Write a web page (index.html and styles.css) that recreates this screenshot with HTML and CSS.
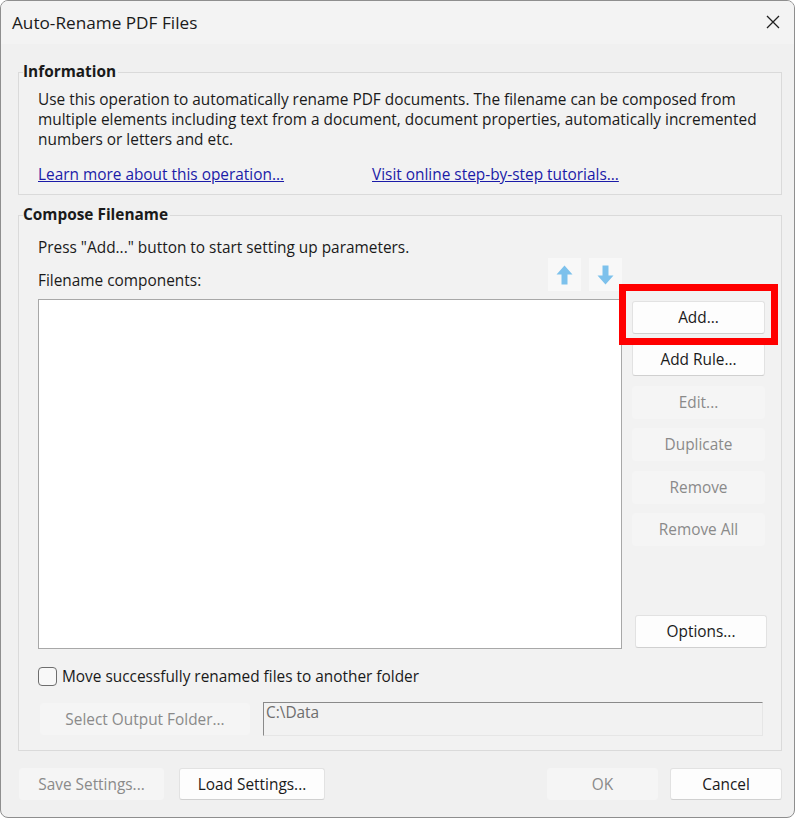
FILE: index.html
```html
<!DOCTYPE html>
<html lang="en">
<head>
    <meta charset="UTF-8">
    <title>Auto-Rename PDF Files</title>
    <link rel="stylesheet" href="styles.css">
</head>
<body>
    <div class="window">
        <div class="titlebar">
            <span class="title">Auto-Rename PDF Files</span>
            <span class="close-btn">
                <svg width="14" height="14" viewBox="0 0 14 14"><path d="M1 1 L13 13 M13 1 L1 13" stroke="#1f1f1f" stroke-width="1.3" fill="none"/></svg>
            </span>
        </div>

        <div class="content">
            <fieldset class="group info-group">
                <legend>Information</legend>
                <p class="info-text">Use this operation to automatically rename PDF documents. The filename can be composed from<br>multiple elements including text from a document, document properties, automatically incremented<br>numbers or letters and etc.</p>
                <div class="links">
                    <a href="#" class="link link-learn">Learn more about this operation...</a>
                    <a href="#" class="link">Visit online step-by-step tutorials...</a>
                </div>
            </fieldset>

            <fieldset class="group compose-group">
                <legend>Compose Filename</legend>
                <p class="hint">Press "Add..." button to start setting up parameters.</p>
                <div class="components-head">
                    <span>Filename components:</span>
                    <div class="arrows">
                        <span class="arrow-btn">
                            <svg width="17" height="20" viewBox="0 0 17 20"><path d="M8.5 0.5 L16.5 9.5 H11.5 V19.5 H5.5 V9.5 H0.5 Z" fill="#7dc1ec"/></svg>
                        </span>
                        <span class="arrow-btn">
                            <svg width="17" height="20" viewBox="0 0 17 20"><path d="M8.5 19.5 L16.5 10.5 H11.5 V0.5 H5.5 V10.5 H0.5 Z" fill="#7dc1ec"/></svg>
                        </span>
                    </div>
                </div>
                <div class="components-body">
                    <div class="list-box"></div>
                    <div class="side-buttons">
                        <button class="btn side-btn">Add...</button>
                        <button class="btn side-btn">Add Rule...</button>
                        <button class="btn side-btn" disabled>Edit...</button>
                        <button class="btn side-btn" disabled>Duplicate</button>
                        <button class="btn side-btn" disabled>Remove</button>
                        <button class="btn side-btn" disabled>Remove All</button>
                        <button class="btn options-btn">Options...</button>
                        <div class="highlight"></div>
                    </div>
                </div>
                <label class="check-row">
                    <span class="checkbox"></span>
                    Move successfully renamed files to another folder
                </label>
                <div class="output-row">
                    <button class="btn folder-btn" disabled>Select Output Folder...</button>
                    <div class="path-box">C:\Data</div>
                </div>
            </fieldset>

            <div class="footer">
                <button class="btn footer-btn" disabled>Save Settings...</button>
                <button class="btn footer-btn load-btn">Load Settings...</button>
                <span class="spacer"></span>
                <button class="btn footer-btn ok-btn" disabled>OK</button>
                <button class="btn footer-btn cancel-btn">Cancel</button>
            </div>
        </div>
    </div>
</body>
</html>
```

FILE: styles.css
```css
body {
    margin: 0;
    background: #ffffff;
    font-family: "Segoe UI", "Open Sans", sans-serif;
    font-size: 15.4px;
    color: #1a1a1a;
}

.window {
    width: 795px;
    height: 818px;
    box-sizing: border-box;
    border: 1px solid #8e8e8e;
    border-radius: 8px;
    background: #f0f0f0;
    overflow: hidden;
}

.titlebar {
    height: 43px;
    background: #f3f3f3;
    display: flex;
    align-items: center;
    justify-content: space-between;
    padding: 0 14px 0 11px;
}
.title {
    font-size: 17.2px;
    color: #1a1a1a;
}
.close-btn {
    display: flex;
    width: 14px;
    height: 14px;
    margin-top: -2px;
}

.content {
    padding: 0 12px 0 17px;
}

.group {
    margin: 0;
    padding: 0 13px 0 19px;
    border: 1px solid #dadada;
    background: #f2f2f2;
    min-width: 0;
}
.group legend {
    padding: 0 2px 0 0;
    margin-left: -15px;
    font-weight: bold;
    line-height: 20px;
}

.info-group {
    margin-top: 18px;
    padding-top: 8px;
    padding-bottom: 9px;
}
.info-text {
    margin: 0;
    line-height: 20px;
    white-space: nowrap;
}
.links {
    margin-top: 15px;
    line-height: 20px;
    display: flex;
}
.link {
    color: #1b1ba8;
    text-decoration: underline;
}
.link-learn {
    width: 334px;
}

.compose-group {
    margin-top: 10px;
    padding-top: 13px;
    padding-bottom: 14px;
}
.hint {
    margin: 0;
    line-height: 20px;
}
.components-head {
    width: 584px;
    height: 33px;
    display: flex;
    align-items: flex-end;
    justify-content: space-between;
    line-height: 20px;
}
.arrows {
    display: flex;
    gap: 8px;
    align-self: flex-start;
}
.arrow-btn {
    width: 33px;
    height: 33px;
    background: #f8f8f8;
    display: flex;
    align-items: center;
    justify-content: center;
}

.components-body {
    margin-top: 8px;
    display: flex;
    gap: 10px;
}
.list-box {
    flex: none;
    width: 584px;
    height: 350px;
    box-sizing: border-box;
    background: #ffffff;
    border: 1px solid #a8a8a8;
}
.side-buttons {
    position: relative;
    flex: none;
    width: 135px;
    padding-top: 2px;
    display: flex;
    flex-direction: column;
    gap: 9.4px;
}

.btn {
    font-family: inherit;
    font-size: 15.4px;
    color: #1a1a1a;
    background: #fdfdfd;
    border: 1px solid #e2e2e2;
    border-bottom-color: #d0d0d0;
    border-radius: 3px;
    padding: 0;
    height: 33px;
    box-sizing: border-box;
}
.btn:disabled {
    color: #8a8a8a;
    background: #f5f5f5;
    border-color: #f5f5f5;
}
.side-btn {
    width: 133px;
}
.options-btn {
    width: 132px;
    margin-top: auto;
    margin-bottom: 1px;
    align-self: flex-end;
}
.highlight {
    position: absolute;
    left: -13px;
    top: -15px;
    width: 159px;
    height: 61px;
    box-sizing: border-box;
    border: 7px solid #ff0000;
}

.check-row {
    margin-top: 18px;
    display: flex;
    align-items: center;
    gap: 5px;
    height: 19px;
}
.checkbox {
    width: 19px;
    height: 19px;
    box-sizing: border-box;
    border: 1px solid #6e6e6e;
    border-radius: 4px;
    background: #f8f8f8;
}

.output-row {
    margin-top: 16px;
    display: flex;
    align-items: center;
    gap: 13px;
}
.folder-btn {
    margin-left: 2px;
    width: 210px;
    height: 32px;
}
.path-box {
    width: 500px;
    height: 34px;
    box-sizing: border-box;
    border: 1px solid #e6e6e6;
    border-top-color: #8a8a8a;
    border-left-color: #8a8a8a;
    color: #6e6e6e;
    padding: 0 2px;
    line-height: 19px;
}

.footer {
    margin-top: 17px;
    display: flex;
    gap: 14px;
}
.footer-btn {
    height: 32px;
    margin-left: 1px;
}
.footer-btn:first-child {
    width: 145px;
}
.load-btn {
    width: 146px;
}
.spacer {
    flex: 1;
}
.ok-btn {
    width: 111px;
}
.cancel-btn {
    width: 112px;
    margin-left: -2px;
}
```
